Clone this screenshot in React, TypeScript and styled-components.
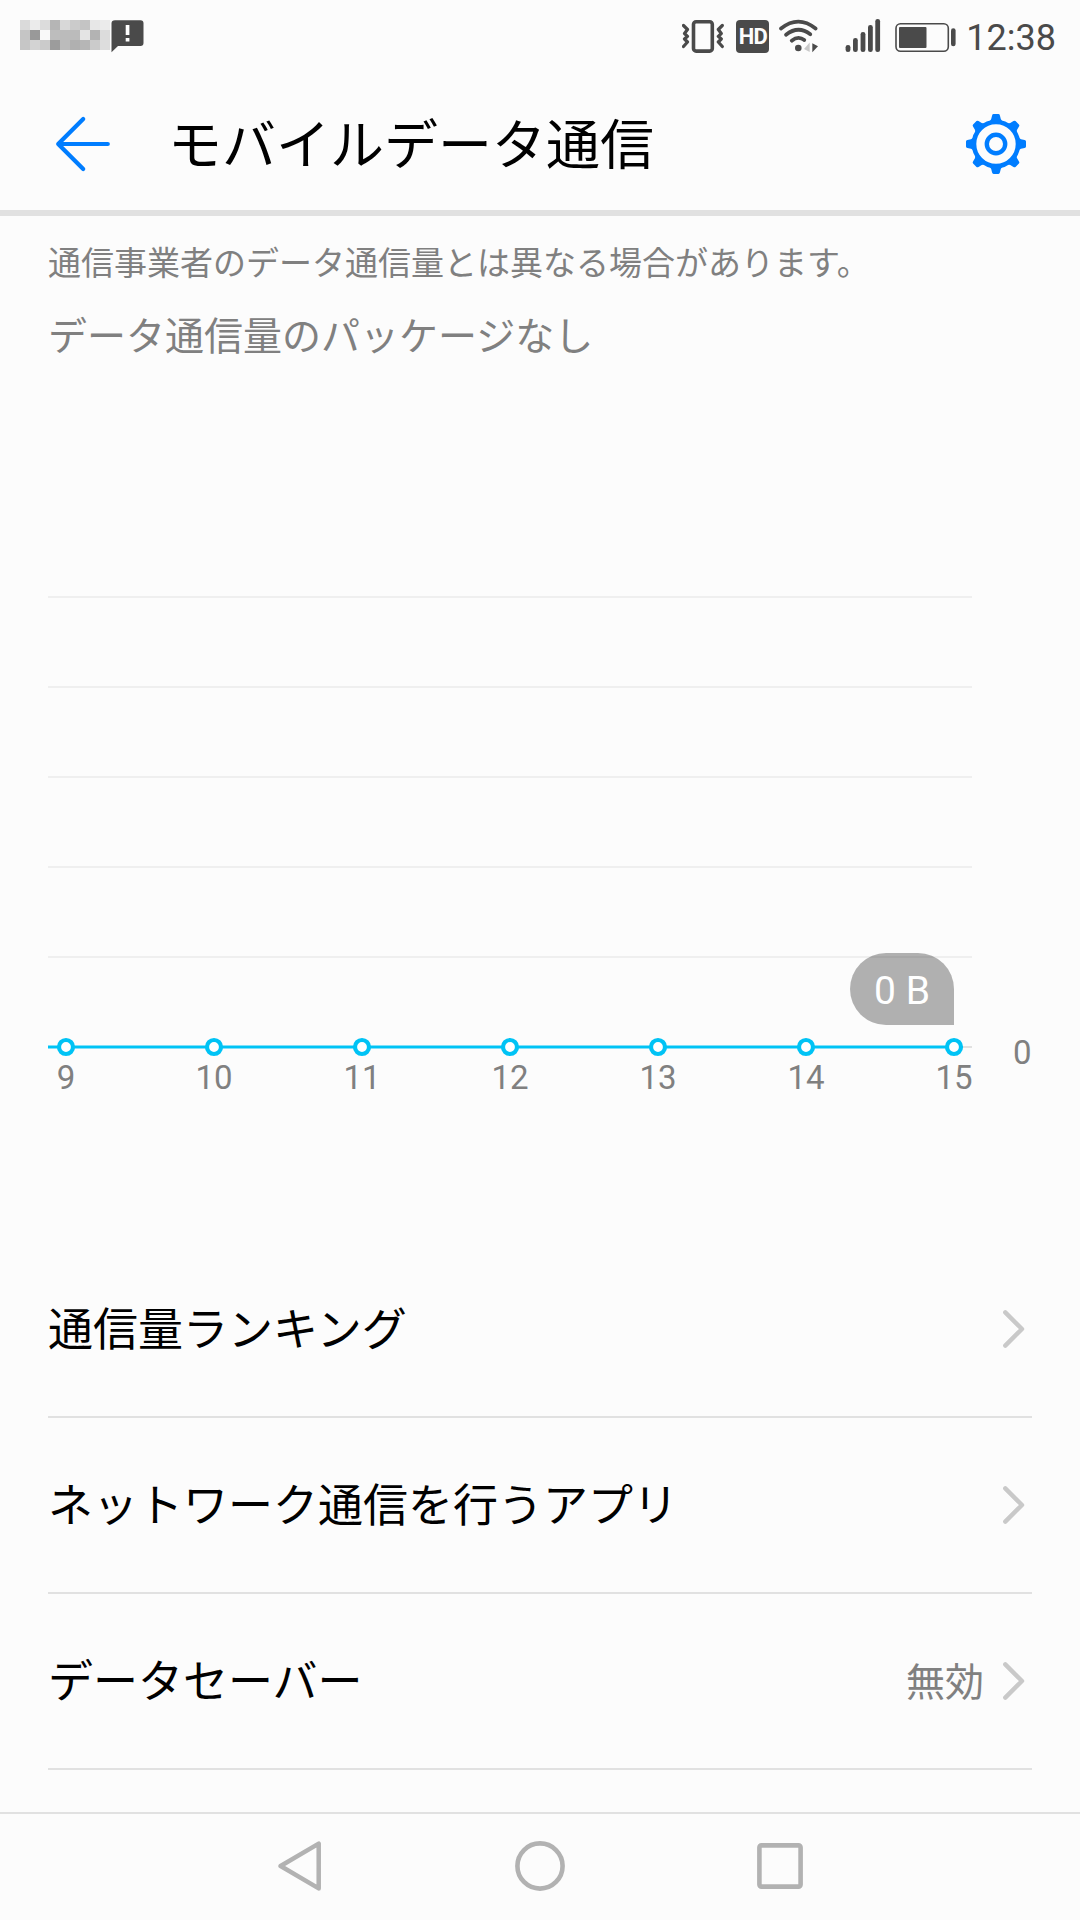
import React from "react";
import styled, { createGlobalStyle } from "styled-components";

const GlobalStyle = createGlobalStyle`
  *, *::before, *::after { box-sizing: border-box; }
  body {
    margin: 0;
    background: #fcfcfc;
    font-family: Roboto, "Noto Sans CJK JP", sans-serif;
    color: #000;
  }
  svg { display: block; flex: none; }
`;

const Screen = styled.div`
  width: 1080px;
  height: 1920px;
  display: flex;
  flex-direction: column;
  overflow: hidden;
  background: #fcfcfc;
`;

const StatusBar = styled.div`
  height: 72px;
  padding: 19px 24px 0 20px;
  display: flex;
  align-items: flex-start;
  justify-content: space-between;
  color: #4a4a4a;
`;

const StatusGroup = styled.div`
  display: flex;
  align-items: flex-start;
`;

const Mosaic = styled.div`
  display: grid;
  grid-template-columns: repeat(9, 10px);
  grid-auto-rows: 10px;
  margin: 1px 1px 0 0;
`;

const Tile = styled.span<{ $shade: string }>`
  background: ${(p) => p.$shade};
`;

const HdBadge = styled.div`
  width: 33px;
  height: 33px;
  margin: 1px 10px 0 12px;
  border-radius: 4px;
  background: #4a4a4a;
  color: #fcfcfc;
  font: 700 22px/34px Roboto, sans-serif;
  letter-spacing: -0.8px;
  text-align: center;
`;

const SignalSlot = styled.div`
  margin: 0 14px 0 26px;
`;

const Clock = styled.time`
  margin: 1px 0 0 9px;
  font-size: 36px;
  line-height: 36px;
`;

const Header = styled.header`
  height: 144px;
  padding: 6px 54px 0 53px;
  display: flex;
  align-items: center;
  border-bottom: 6px solid #e1e1e1;
`;

const IconButton = styled.button`
  border: 0;
  padding: 0;
  background: none;
  color: #007dff;
  display: flex;
`;

const Title = styled.h1`
  flex: 1;
  margin: 0 0 0 57px;
  padding-top: 6px;
  font-size: 54px;
  font-weight: 400;
  line-height: 72px;
`;

const Summary = styled.section`
  height: 344px;
  padding: 27px 48px 0;
  color: #808080;
`;

const Notice = styled.p`
  margin: 0;
  font-size: 33px;
  line-height: 42px;
`;

const PlanStatus = styled.p`
  margin: 27px 0 0;
  font-size: 39px;
  line-height: 50px;
`;

const ChartArea = styled.section`
  position: relative;
  height: 682px;
  padding: 0 48px;

  text {
    font: 400 33px Roboto, sans-serif;
    fill: #808080;
  }
`;

const UsageBubble = styled.div`
  position: absolute;
  left: 850px;
  top: 393px;
  width: 104px;
  height: 72px;
  border-radius: 36px 36px 0 36px;
  background: rgba(0, 0, 0, 0.3);
  color: #fff;
  font-size: 39px;
  line-height: 76px;
  text-align: center;
`;

const List = styled.ul`
  flex: 1;
  margin: 0;
  padding: 0 48px;
  list-style: none;
`;

const Row = styled.li`
  height: 176px;
  padding-right: 6px;
  display: flex;
  align-items: center;
  border-bottom: 2px solid #e1e1e1;
`;

const RowLabel = styled.span`
  flex: 1;
  padding-top: 3px;
  font-size: 45px;
  line-height: 60px;
`;

const RowValue = styled.span`
  margin-right: 18px;
  padding-top: 4px;
  font-size: 39px;
  line-height: 52px;
  color: #808080;
`;

const NavBar = styled.nav`
  height: 108px;
  padding: 27px 277px 0 278px;
  display: flex;
  justify-content: space-between;
  border-top: 2px solid #e1e1e1;
`;

const mosaicRows = [
  ["#dadada", "#ebebeb", "#dcdcdc", "#b5b5b5", "#d8d8d8", "#cbcbcb", "#c4c4c4", "#e7e7e7", "#ebebeb"],
  ["#c5c5c5", "#999999", "#f9f9f9", "#bdbdbd", "#bbbbbb", "#bbbbbb", "#e4e4e4", "#b3b3b3", "#dcdcdc"],
  ["#c6c6c6", "#d3d3d3", "#cbcbcb", "#9c9c9c", "#bbbbbb", "#b0b0b0", "#b6b6b6", "#cbcbcb", "#dddddd"],
];

const NoticeIcon = () => (
  <svg width="34" height="34" viewBox="0 0 34 34">
    <path d="M4 1.3H29.5Q32.5 1.3 32.5 4.3V24Q32.5 27 29.5 27H7L.5 33.3V4.3Q.5 1.3 4 1.3Z" fill="#4a4a4a" />
    <path d="M14.7 6h3.7v10h-3.7zM14.7 19h3.7v3.5h-3.7z" fill="#fff" />
  </svg>
);

const VibrateIcon = () => (
  <svg width="42" height="34" viewBox="0 0 42 34" fill="none" stroke="#4a4a4a">
    <rect x="11.5" y="2.7" width="18.8" height="29.4" rx="2.6" strokeWidth="3.6" />
    <path d="M1.5 6.5L5.5 10.5L2.5 14.5L5.5 17.3L2.5 20L5.5 23L1.5 27.5" strokeWidth="3.2" strokeLinecap="round" strokeLinejoin="round" />
    <path d="M40.3 6.5L36.3 10.5L39.3 14.5L36.3 17.3L39.3 20L36.3 23L40.3 27.5" strokeWidth="3.2" strokeLinecap="round" strokeLinejoin="round" />
  </svg>
);

const WifiIcon = () => (
  <svg width="40" height="34" viewBox="0 0 40 34" fill="none" stroke="#4a4a4a" strokeWidth="3.7" strokeLinecap="round">
    <path d="M2 9.5Q19.3-4.3 36.6 9.5" />
    <path d="M7 15.8Q19.3 6 31.3 15.3" />
    <path d="M12.7 21.7Q19.3 16.3 25.3 21" />
    <circle cx="19.3" cy="29" r="3.3" fill="#4a4a4a" stroke="none" />
    <path d="M25 30L30.7 23.5V33Z" fill="#c8c8c8" stroke="none" />
    <path d="M33.3 24.3L39 27.3L33.3 33.3Z" fill="#4a4a4a" stroke="none" />
  </svg>
);

const SignalIcon = () => (
  <svg width="36" height="34" viewBox="0 0 36 34" fill="#4a4a4a">
    <rect x=".6" y="26" width="4.8" height="7" rx="2.3" />
    <rect x="8" y="19" width="4.8" height="14" rx="2.3" />
    <rect x="15.6" y="13" width="4.8" height="20" rx="2.3" />
    <rect x="23" y="6" width="4.8" height="27" rx="2.3" />
    <rect x="30.3" y="0" width="4.8" height="33" rx="2.3" />
  </svg>
);

const BatteryIcon = () => (
  <svg width="62" height="34" viewBox="0 0 62 34">
    <rect x="1" y="4.8" width="52.3" height="27.4" rx="4.5" fill="none" stroke="#4a4a4a" strokeWidth="1.6" />
    <rect x="4" y="8" width="27.5" height="21" rx="1" fill="#4a4a4a" />
    <rect x="56" y="9.3" width="4.6" height="18" rx="2.3" fill="#4a4a4a" />
  </svg>
);

const BackArrow = () => (
  <svg width="58" height="58" viewBox="0 0 58 58" fill="none" stroke="currentColor" strokeWidth="4.2" strokeLinecap="round" strokeLinejoin="round">
    <path d="M54.8 29H5.2M30.2 4L5.2 29L30.2 54" />
  </svg>
);

const GearIcon = () => (
  <svg width="60" height="60" viewBox="-30 -30 60 60">
    <circle r="22" fill="none" stroke="currentColor" strokeWidth="4.6" />
    <circle r="9.2" fill="none" stroke="currentColor" strokeWidth="4.4" />
    {[0, 45, 90, 135, 180, 225, 270, 315].map((angle) => (
      <path
        key={angle}
        transform={`rotate(${angle})`}
        d="M-8-21.8Q-5.4-23-4.8-25L-3.9-28.6Q-3.6-30-2.4-30H2.4Q3.6-30 3.9-28.6L4.8-25Q5.4-23 8-21.8Z"
        fill="currentColor"
      />
    ))}
  </svg>
);

const Chevron = () => (
  <svg width="24" height="40" viewBox="0 0 24 40" fill="none" stroke="#c9c9c9" strokeWidth="4.4" strokeLinecap="round" strokeLinejoin="round">
    <path d="M3.3 3.4L20 20L3.3 36.6" />
  </svg>
);

const days = [9, 10, 11, 12, 13, 14, 15];
const gridLines = [37, 127, 217, 307, 397, 487];

const UsageChart = () => (
  <ChartArea>
    <svg width="984" height="560" viewBox="0 0 984 560">
      {gridLines.map((y, i) => (
        <path key={y} d={`M0 ${y}H924`} stroke={i === 5 ? "#e1e1e1" : "#efefef"} strokeWidth="2" />
      ))}
      <path d="M0 487H906" stroke="#00c3f5" strokeWidth="3.2" />
      {days.map((day, i) => (
        <g key={day}>
          <circle cx={18 + i * 148} cy="487" r="7" fill="#fff" stroke="#00c3f5" strokeWidth="4.2" />
          <text x={18 + i * 148} y="529" textAnchor="middle">{day}</text>
        </g>
      ))}
      <text x="983.5" y="504" textAnchor="end">0</text>
    </svg>
    <UsageBubble>0 B</UsageBubble>
  </ChartArea>
);

const items: { label: string; value?: string }[] = [
  { label: "通信量ランキング" },
  { label: "ネットワーク通信を行うアプリ" },
  { label: "データセーバー", value: "無効" },
];

export default function App() {
  return (
    <Screen>
      <GlobalStyle />
      <StatusBar>
        <StatusGroup>
          <Mosaic>
            {mosaicRows.flat().map((shade, i) => (
              <Tile key={i} $shade={shade} />
            ))}
          </Mosaic>
          <NoticeIcon />
        </StatusGroup>
        <StatusGroup>
          <VibrateIcon />
          <HdBadge>HD</HdBadge>
          <WifiIcon />
          <SignalSlot><SignalIcon /></SignalSlot>
          <BatteryIcon />
          <Clock>12:38</Clock>
        </StatusGroup>
      </StatusBar>
      <Header>
        <IconButton aria-label="戻る"><BackArrow /></IconButton>
        <Title>モバイルデータ通信</Title>
        <IconButton aria-label="設定"><GearIcon /></IconButton>
      </Header>
      <Summary>
        <Notice>通信事業者のデータ通信量とは異なる場合があります。</Notice>
        <PlanStatus>データ通信量のパッケージなし</PlanStatus>
      </Summary>
      <UsageChart />
      <List>
        {items.map((item) => (
          <Row key={item.label}>
            <RowLabel>{item.label}</RowLabel>
            {item.value && <RowValue>{item.value}</RowValue>}
            <Chevron />
          </Row>
        ))}
      </List>
      <NavBar>
        <svg width="44" height="52" viewBox="0 0 44 52" fill="none" stroke="#b2b2b2" strokeWidth="4.5" strokeLinejoin="round">
          <path d="M40.7 2.6V47.4L2.6 25Z" />
        </svg>
        <svg width="50" height="50" viewBox="0 0 50 50" fill="none" stroke="#b2b2b2" strokeWidth="4.6">
          <circle cx="25" cy="25" r="22.6" />
        </svg>
        <svg width="46" height="50" viewBox="0 0 46 50" fill="none" stroke="#b2b2b2" strokeWidth="4.6">
          <rect x="2.4" y="4.4" width="41.2" height="41.2" rx="2" />
        </svg>
      </NavBar>
    </Screen>
  );
}
